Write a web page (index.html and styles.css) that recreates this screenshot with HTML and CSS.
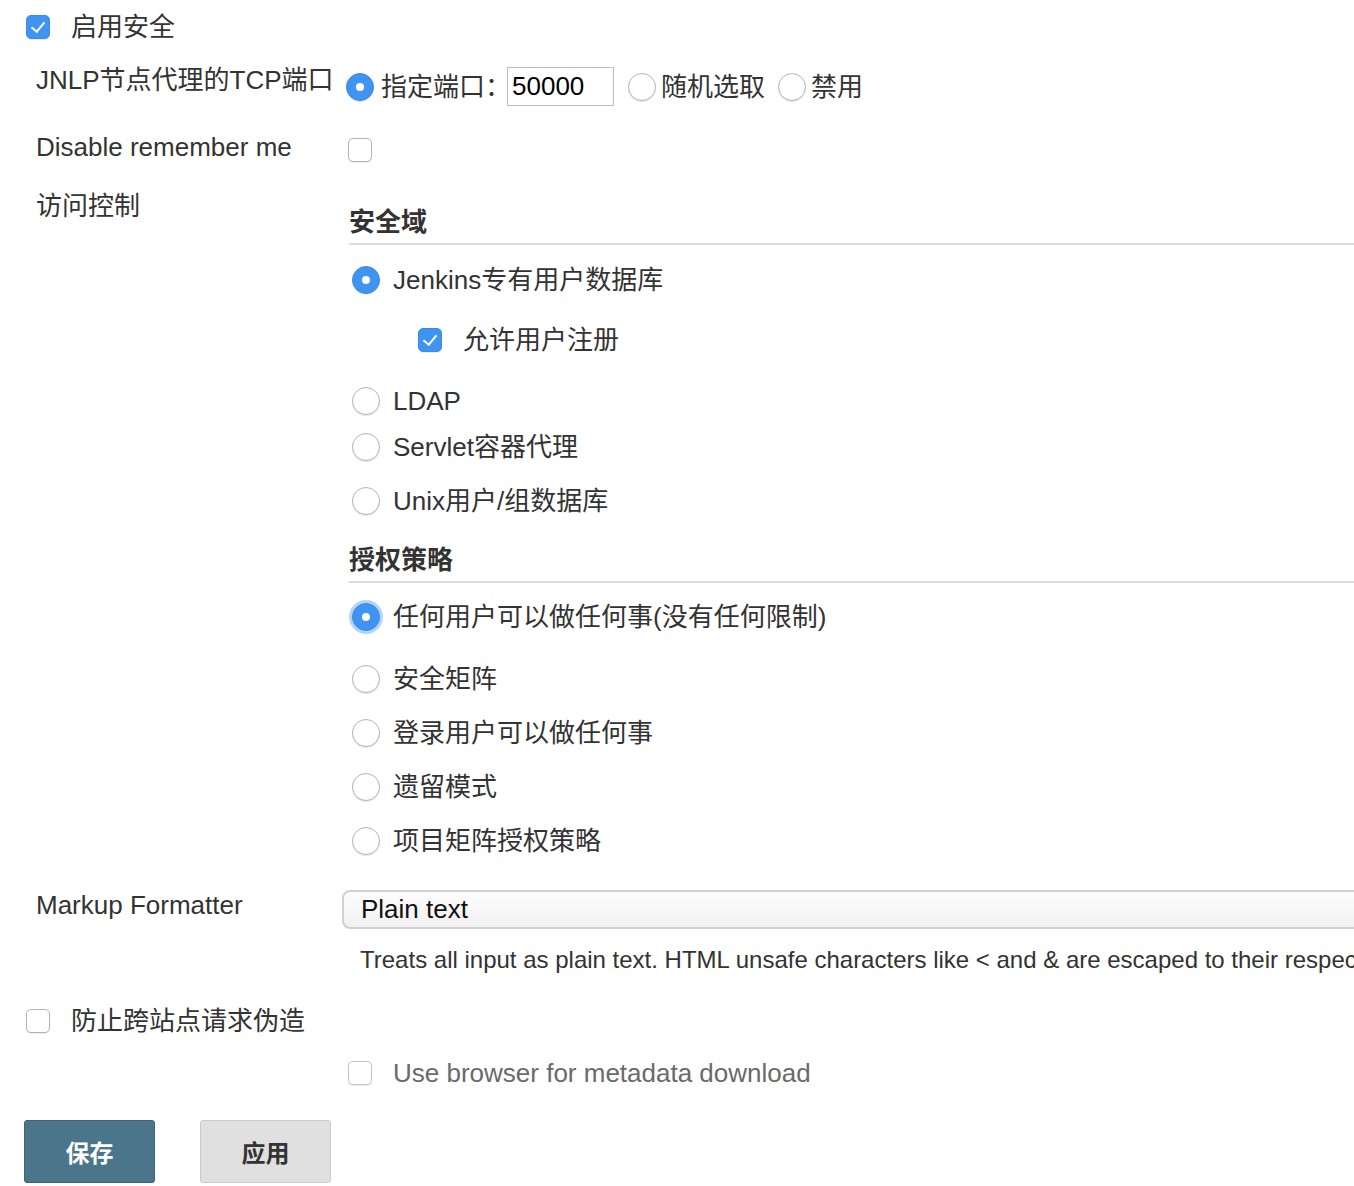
FILE: index.html
```html
<!DOCTYPE html>
<html lang="zh-CN">
<head>
<meta charset="utf-8">
<title>Configure Global Security</title>
<link rel="stylesheet" href="styles.css">
</head>
<body>
<div class="page">
  <div class="row-top r-enable">
    <span class="cb checked"></span>
    <span class="top-label">启用安全</span>
  </div>

  <div class="row r-jnlp">
    <div class="label l-jnlp">JNLP节点代理的TCP端口</div>
    <div class="content c-jnlp">
      <span class="radio on"></span>
      <span class="opt-label">指定端口：</span>
      <span class="port-input">50000</span>
      <span class="radio r-gap"></span>
      <span class="opt-label">随机选取</span>
      <span class="radio r-gap2"></span>
      <span class="opt-label">禁用</span>
    </div>
  </div>

  <div class="row r-remember">
    <div class="label l-remember">Disable remember me</div>
    <div class="content c-remember"><span class="cb"></span></div>
  </div>

  <div class="row r-access">
    <div class="label l-access">访问控制</div>
    <div class="content c-access">
      <div class="section-head h-realm">安全域</div>
      <div class="item m-jenkins"><span class="radio on"></span><span class="item-label">Jenkins专有用户数据库</span></div>
      <div class="item sub m-signup"><span class="cb checked"></span><span class="item-label sub-label">允许用户注册</span></div>
      <div class="item m-ldap"><span class="radio"></span><span class="item-label">LDAP</span></div>
      <div class="item m-servlet"><span class="radio"></span><span class="item-label">Servlet容器代理</span></div>
      <div class="item m-unix"><span class="radio"></span><span class="item-label">Unix用户/组数据库</span></div>

      <div class="section-head h-authz">授权策略</div>
      <div class="item m-any"><span class="radio on focus"></span><span class="item-label">任何用户可以做任何事(没有任何限制)</span></div>
      <div class="item m-matrix"><span class="radio"></span><span class="item-label">安全矩阵</span></div>
      <div class="item m-std"><span class="radio"></span><span class="item-label">登录用户可以做任何事</span></div>
      <div class="item m-std"><span class="radio"></span><span class="item-label">遗留模式</span></div>
      <div class="item m-std"><span class="radio"></span><span class="item-label">项目矩阵授权策略</span></div>
    </div>
  </div>

  <div class="row r-markup">
    <div class="label l-markup">Markup Formatter</div>
    <div class="content c-markup">
      <div class="select">Plain text</div>
      <div class="help">Treats all input as plain text. HTML unsafe characters like &lt; and &amp; are escaped to their respective character entities.</div>
    </div>
  </div>

  <div class="row-top r-csrf">
    <span class="cb"></span>
    <span class="top-label">防止跨站点请求伪造</span>
  </div>

  <div class="row r-browser">
    <div class="label"></div>
    <div class="content c-browser">
      <span class="cb faded"></span>
      <span class="item-label faded-text">Use browser for metadata download</span>
    </div>
  </div>

  <div class="buttons">
    <button class="btn btn-save">保存</button>
    <button class="btn btn-apply">应用</button>
  </div>
</div>
</body>
</html>
```

FILE: styles.css
```css
html, body {
  margin: 0;
  padding: 0;
  overflow: hidden;
  background: #fff;
}

body {
  font-family: "Liberation Sans", "Noto Sans CJK SC", sans-serif;
  font-size: 26px;
  line-height: 30px;
  color: #333;
  width: 1354px;
  height: 1186px;
}

.page {
  padding-left: 24px;
}

/* generic controls */
.cb {
  display: inline-block;
  box-sizing: border-box;
  width: 24px;
  height: 24px;
  border: 1px solid #b3b3b3;
  border-radius: 5px;
  background: #fff;
  box-shadow: 0 1px 1px rgba(0,0,0,0.08);
  position: relative;
  flex: none;
}
.cb.checked {
  background: #3e94f0;
  border-color: #3a8ce6;
}
.cb.checked::after {
  content: "";
  position: absolute;
  left: 7px;
  top: 3px;
  width: 6px;
  height: 11px;
  border-right: 2.5px solid #fff;
  border-bottom: 2.5px solid #fff;
  transform: rotate(40deg);
}

.radio {
  display: inline-block;
  box-sizing: border-box;
  width: 28px;
  height: 28px;
  border-radius: 50%;
  border: 1px solid #b5b5b5;
  background: #fff;
  box-shadow: 0 1px 1px rgba(0,0,0,0.1);
  position: relative;
  flex: none;
}
.radio.on {
  background: #3e94f0;
  border-color: #3a8ce6;
}
.radio.on::after {
  content: "";
  position: absolute;
  left: 50%;
  top: 50%;
  width: 8px;
  height: 8px;
  margin: -4px 0 0 -4px;
  border-radius: 50%;
  background: #fff;
}
.radio.focus {
  box-shadow: 0 0 0 3px rgba(120, 175, 240, 0.55);
}

/* top-level rows (checkbox + label) */
.row-top {
  display: flex;
  align-items: center;
  height: 40px;
}
.row-top .cb {
  margin-left: 2px;
}
.top-label {
  margin-left: 21px;
}
.r-enable {
  margin-top: 7px;
}
.r-csrf {
  margin-top: 26px;
}

/* label / content rows */
.row {
  display: flex;
  align-items: flex-start;
}
.label {
  width: 310px;
  padding-left: 12px;
  flex: none;
  white-space: nowrap;
}
.content {
  flex: 1;
  min-width: 0;
}

.r-jnlp { margin-top: 7px; }
.l-jnlp { padding-top: 11px; }
.c-jnlp {
  display: flex;
  align-items: center;
  padding-top: 13px;
  height: 39px;
}
.opt-label {
  margin-left: 7px;
  white-space: nowrap;
}
.port-input {
  box-sizing: border-box;
  display: inline-block;
  width: 107px;
  height: 39px;
  line-height: 37px;
  border: 1px solid #bdbdbd;
  padding-left: 4px;
  color: #000;
  margin-left: -4px;
  flex: none;
}
.r-gap { margin-left: 14px; }
.r-gap2 { margin-left: 13px; }
.r-gap + .opt-label,
.r-gap2 + .opt-label { margin-left: 5px; }

.r-remember { margin-top: 14px; }
.l-remember { padding-top: 12px; }
.c-remember { padding-top: 18px; padding-left: 2px; }
.c-remember .cb { display: block; }

.r-access { margin-top: 18px; }
.l-access { padding-top: 11px; }

.section-head {
  font-weight: bold;
  margin-left: 3px;
  padding-bottom: 6px;
  border-bottom: 2px solid #dcdcdc;
}
.h-realm { margin-top: 27px; }
.h-authz { margin-top: 24px; }

.item {
  display: flex;
  align-items: center;
  height: 40px;
  padding-left: 6px;
}
.item-label {
  margin-left: 13px;
  white-space: nowrap;
}
.item.sub {
  padding-left: 72px;
}
.sub-label {
  margin-left: 21px;
}
.m-jenkins { margin-top: 15px; }
.m-signup { margin-top: 20px; }
.m-ldap { margin-top: 21px; }
.m-servlet { margin-top: 6px; }
.m-unix { margin-top: 14px; }
.m-any { margin-top: 14px; }
.m-matrix { margin-top: 22px; }
.m-std { margin-top: 14px; }

.r-markup { margin-top: 29px; }
.l-markup { padding-top: 0; }
.c-markup {
  margin-left: -4px;
}
.select {
  box-sizing: border-box;
  width: 1040px;
  height: 39px;
  line-height: 35px;
  border: 2px solid #d0d0d0;
  border-radius: 8px;
  background: linear-gradient(#fdfdfd, #f1f1f1);
  padding-left: 17px;
  color: #111;
}
.help {
  margin-top: 16px;
  padding-left: 18px;
  font-size: 24px;
  white-space: nowrap;
  color: #333;
}

.r-browser { margin-top: 12px; }
.c-browser {
  display: flex;
  align-items: center;
  height: 40px;
  padding-left: 2px;
}
.cb.faded {
  border-color: #c4c4c4;
}
.faded-text {
  color: #6a6a6a;
  margin-left: 21px;
}

.buttons {
  display: flex;
  gap: 45px;
  margin-top: 27px;
}
.btn {
  box-sizing: border-box;
  width: 131px;
  height: 63px;
  font-family: "Liberation Sans", "Noto Sans CJK SC", sans-serif;
  font-size: 24px;
  font-weight: bold;
  border-radius: 3px;
  padding: 0;
}
.btn-save {
  background: #4b758b;
  border: 1px solid #3f6479;
  color: #fff;
}
.btn-apply {
  background: #e0e0e0;
  border: 1px solid #cbcbcb;
  color: #333;
}
```
